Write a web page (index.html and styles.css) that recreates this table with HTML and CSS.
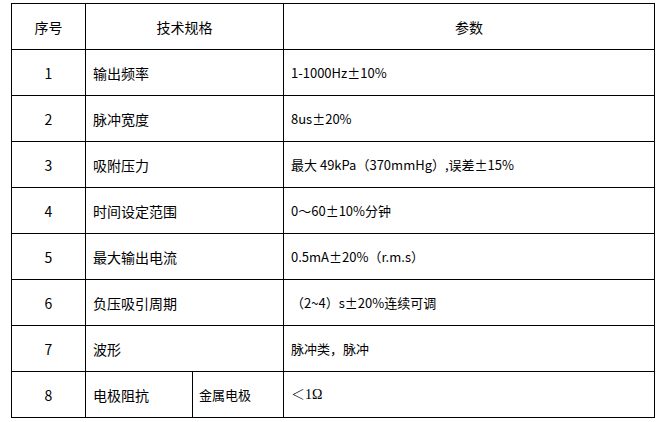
FILE: index.html
```html
<!DOCTYPE html>
<html lang="zh">
<head>
<meta charset="utf-8">
<link rel="stylesheet" href="styles.css">
</head>
<body>
<table class="spec">
  <colgroup>
    <col class="c-no">
    <col class="c-name">
    <col class="c-sub">
    <col class="c-val">
  </colgroup>
  <tr class="head">
    <td class="num">序号</td>
    <td colspan="2" class="center">技术规格</td>
    <td class="center">参数</td>
  </tr>
  <tr><td class="num">1</td><td colspan="2">输出频率</td><td class="val">1-1000Hz±10%</td></tr>
  <tr><td class="num">2</td><td colspan="2">脉冲宽度</td><td class="val">8us±20%</td></tr>
  <tr><td class="num">3</td><td colspan="2">吸附压力</td><td class="val">最大 49kPa（370mmHg）,误差±15%</td></tr>
  <tr><td class="num">4</td><td colspan="2">时间设定范围</td><td class="val">0～60±10%分钟</td></tr>
  <tr><td class="num">5</td><td colspan="2">最大输出电流</td><td class="val">0.5mA±20%（r.m.s）</td></tr>
  <tr><td class="num">6</td><td colspan="2">负压吸引周期</td><td class="val">（2~4）s±20%连续可调</td></tr>
  <tr><td class="num">7</td><td colspan="2">波形</td><td class="val">脉冲类，脉冲</td></tr>
  <tr><td class="num">8</td><td>电极阻抗</td><td class="small">金属电极</td><td class="val"><span class="serif">＜1Ω</span></td></tr>
</table>
</body>
</html>
```
FILE: styles.css
```css
html, body {
  margin: 0;
  padding: 0;
  background: #fff;
}
body {
  padding: 3px 0 0 11px;
  font-family: "Noto Sans CJK SC", "Microsoft YaHei", sans-serif;
  font-size: 14px;
  font-weight: 400;
  color: #000;
}
.spec {
  border-collapse: collapse;
  table-layout: fixed;
  width: 643px;
}
.c-no { width: 74px; }
.c-name { width: 107px; }
.c-sub { width: 91px; }
.c-val { width: 371px; }
.spec td {
  border: 1px solid #000;
  height: 45px;
  padding: 0 0 0 7px;
  vertical-align: middle;
  line-height: 20px;
  white-space: nowrap;
}
.spec td.num,
.spec td.center {
  text-align: center;
  padding: 0;
}
.spec td.val {
  font-size: 13px;
}
.spec td.small {
  font-size: 13px;
  padding-left: 6px;
}
.serif {
  font-family: "Liberation Serif", "Noto Sans CJK SC", serif;
  font-size: 14px;
  font-weight: 300;
}
```
